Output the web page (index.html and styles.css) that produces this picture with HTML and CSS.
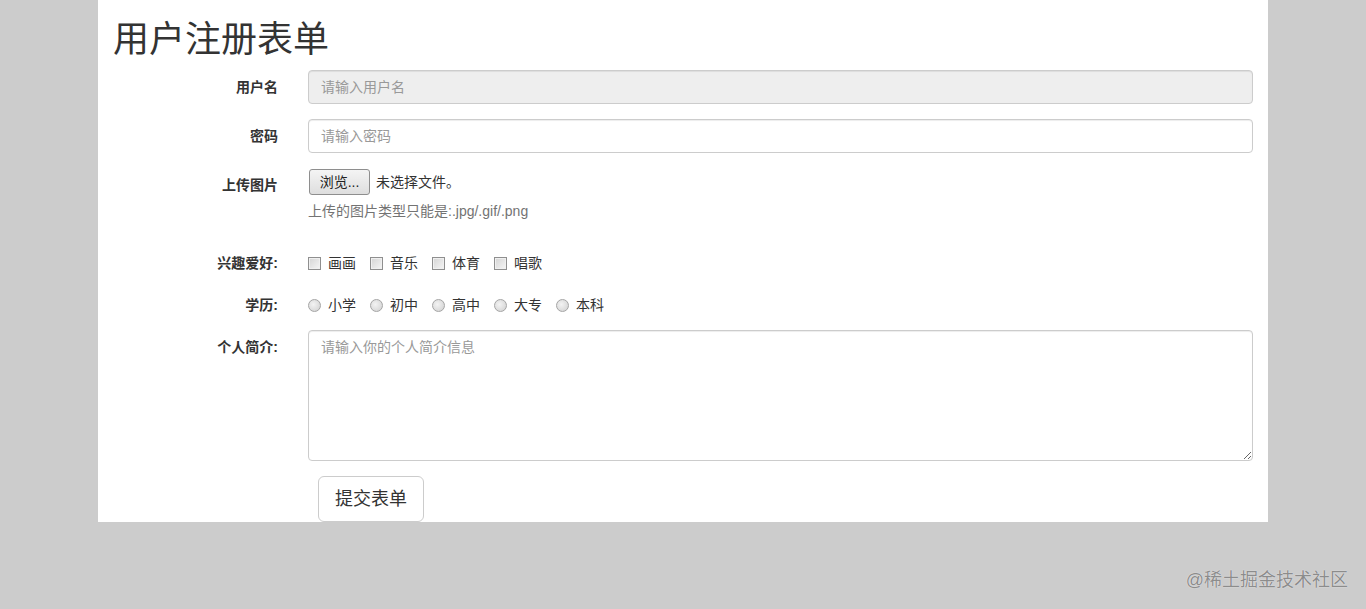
FILE: index.html
```html
<!DOCTYPE html>
<html lang="zh-CN">
<head>
<meta charset="utf-8">
<title>用户注册表单</title>
<link rel="stylesheet" href="styles.css">
</head>
<body>
<div class="container">
  <h1 class="title">用户注册表单</h1>
  <form class="form">
    <div class="group">
      <label class="label">用户名</label>
      <div class="field"><input class="input" type="text" placeholder="请输入用户名" disabled></div>
    </div>
    <div class="group">
      <label class="label">密码</label>
      <div class="field"><input class="input" type="password" placeholder="请输入密码"></div>
    </div>
    <div class="group">
      <label class="label">上传图片</label>
      <div class="field">
        <div class="file-line">
          <span class="file-btn">浏览...</span>
          <span class="file-name">未选择文件。</span>
        </div>
        <p class="help">上传的图片类型只能是:.jpg/.gif/.png</p>
      </div>
    </div>
    <div class="group">
      <label class="label">兴趣爱好:</label>
      <div class="field choices">
        <label class="choice"><span class="box"></span>画画</label>
        <label class="choice"><span class="box"></span>音乐</label>
        <label class="choice"><span class="box"></span>体育</label>
        <label class="choice"><span class="box"></span>唱歌</label>
      </div>
    </div>
    <div class="group">
      <label class="label">学历:</label>
      <div class="field choices">
        <label class="choice"><span class="radio"></span>小学</label>
        <label class="choice"><span class="radio"></span>初中</label>
        <label class="choice"><span class="radio"></span>高中</label>
        <label class="choice"><span class="radio"></span>大专</label>
        <label class="choice"><span class="radio"></span>本科</label>
      </div>
    </div>
    <div class="group">
      <label class="label">个人简介:</label>
      <div class="field"><textarea class="input textarea" placeholder="请输入你的个人简介信息"></textarea></div>
    </div>
    <div class="group last">
      <div class="spacer"></div>
      <div class="field"><button type="button" class="submit">提交表单</button></div>
    </div>
  </form>
</div>
<div class="watermark">@稀土掘金技术社区</div>
</body>
</html>
```

FILE: styles.css
```css
* { box-sizing: border-box; }
html, body { margin: 0; padding: 0; }
body {
  background: #cccccc;
  font-family: "Liberation Sans", "Noto Sans CJK SC", sans-serif;
  font-size: 14px;
  line-height: 20px;
  color: #333333;
  height: 609px;
  overflow: hidden;
  position: relative;
}
.container {
  width: 1170px;
  margin: 0 auto;
  padding: 0 15px;
  background: #ffffff;
  display: flow-root;
}
.title {
  font-size: 36px;
  font-weight: 400;
  line-height: 40px;
  margin: 20px 0 10px;
  color: #333333;
}
.form { margin: 0 -15px; }
.group {
  display: grid;
  grid-template-columns: 195px 975px;
  margin-bottom: 15px;
}
.group.last { margin-bottom: 0; }
.label {
  padding: 7px 15px 0;
  text-align: right;
  font-weight: 700;
}
.field { padding: 0 15px; }
.input {
  display: block;
  width: 100%;
  height: 34px;
  padding: 6px 12px;
  font: inherit;
  color: #555555;
  background: #ffffff;
  border: 1px solid #cccccc;
  border-radius: 4px;
  box-shadow: inset 0 1px 1px rgba(0,0,0,.075);
}
.input::placeholder { color: #999999; }
.input:disabled { background: #eeeeee; }
.textarea {
  height: 131px;
  resize: vertical;
}
.file-line {
  display: flex;
  align-items: center;
  height: 28px;
}
.file-btn {
  display: inline-flex;
  align-items: center;
  justify-content: center;
  width: 61px;
  height: 26px;
  margin-left: 1px;
  border: 1px solid #8e8e8e;
  border-radius: 3px;
  background: linear-gradient(#f4f4f4, #dedede);
  color: #222222;
  font-size: 14px;
}
.file-name { margin-left: 6px; color: #333333; }
.help {
  margin: 5px 0 10px;
  color: #737373;
}
.choices {
  display: flex;
  gap: 14px;
  padding-top: 7px;
  min-height: 27px;
}
.choice {
  display: flex;
  align-items: center;
  height: 20px;
}
.box {
  width: 13px;
  height: 13px;
  margin-right: 7px;
  border: 1px solid #8f8f8f;
  background: linear-gradient(135deg, #d4d4d4, #f5f5f5);
  box-shadow: inset 0 0 0 1px #f0f0f0;
}
.radio {
  width: 13px;
  height: 13px;
  margin-right: 7px;
  border: 1px solid #a5a5a5;
  border-radius: 50%;
  background: radial-gradient(circle at 40% 40%, #f3f3f3, #cfcfcf);
}
.submit {
  margin-left: 10px;
  height: 46px;
  padding: 10px 16px;
  font-family: inherit;
  font-size: 18px;
  line-height: 24px;
  color: #333333;
  background: #ffffff;
  border: 1px solid #cccccc;
  border-radius: 6px;
}
.watermark {
  position: absolute;
  right: 18px;
  top: 568px;
  font-size: 18px;
  line-height: 24px;
  color: #8c8c8c;
  text-shadow: 0 0 1px #ffffff;
}
```
